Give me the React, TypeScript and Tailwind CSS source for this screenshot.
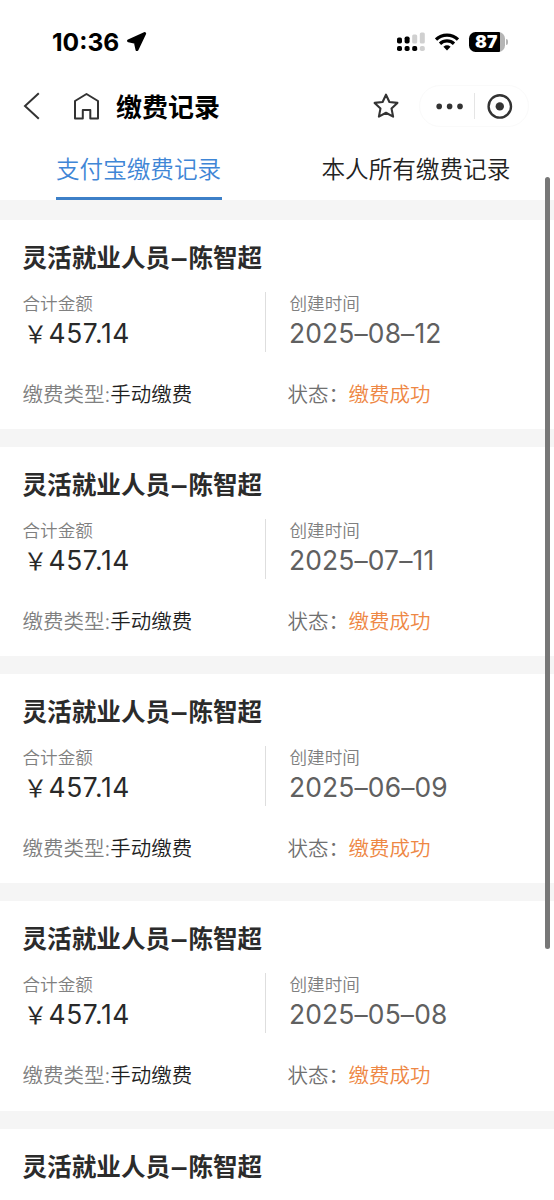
import React from "react";

const DATES = ["2025–08–12", "2025–07–11", "2025–06–09", "2025–05–08"];

function StatusBar() {
  return (
    <div className="flex h-[72px] items-center pt-[11px] pl-[52px] text-black">
      <span className="w-[68px] text-[24.6px] leading-[28px] font-bold whitespace-nowrap">10:36</span>
      <svg className="ml-[6px]" width="21" height="20" viewBox="0 0 21 20">
        <path d="M18.6 1.6 2.6 8.8 9.4 10.4 11 17.6Z" fill="currentColor" stroke="currentColor" strokeWidth="3" strokeLinejoin="round" />
      </svg>
      <svg className="ml-[250px]" width="28" height="20" viewBox="0 0 28 20">
        <g fill="#000">
          <rect x="0" y="5.5" width="5" height="6" rx="1.8" />
          <rect x="7.6" y="4.5" width="5" height="7" rx="1.8" />
          <rect x="0" y="14" width="5" height="5" rx="1.8" />
          <rect x="7.6" y="14" width="5" height="5" rx="1.8" />
          <rect x="15.2" y="14" width="5" height="5" rx="1.8" />
        </g>
        <g fill="#d0d0d0">
          <rect x="15.2" y="2.5" width="5" height="9" rx="1.5" />
          <rect x="22.8" y="0.5" width="5" height="11" rx="1.5" />
          <rect x="22.8" y="14" width="5" height="5" rx="1.8" />
        </g>
      </svg>
      <svg className="ml-[10px]" width="24" height="18" viewBox="0 0 24 18">
        <g fill="none" stroke="#000" strokeWidth="3.3">
          <path d="M1 6.6C7 .6 17 .6 23 6.6" />
          <path d="M5 10.8C9 7 15 7 19 10.8" />
        </g>
        <path d="M12 17.5 8.4 13.8Q12 10.9 15.6 13.8Z" />
      </svg>
      <div className="ml-[10px] flex h-[20px] w-[36px] items-center overflow-hidden rounded-[6.5px] bg-[linear-gradient(90deg,#000_31px,#b5b5b5_31px)] pl-[6px] text-[17.5px] leading-[20px] font-black text-white">
        87
      </div>
      <span className="ml-px h-[6px] w-[2px] rounded-r-full bg-[#b5b5b5]" />
    </div>
  );
}

function NavBar() {
  return (
    <div className="flex h-[68px] items-center pl-[23px] text-[#333]">
      <svg width="17" height="28" viewBox="0 0 17 28" fill="none" stroke="currentColor" strokeWidth="2">
        <path d="M15.8 1.2 2 14 15.8 26.8" />
      </svg>
      <svg className="ml-[33px]" width="27" height="28" viewBox="0 0 27 28" fill="none" stroke="currentColor" strokeWidth="2" strokeLinejoin="round">
        <path d="M2 9 13.5 2 25 9V26.5H17.3V18H9.8V26.5H2Z" />
      </svg>
      <h1 className="ml-[16px] w-[106px] pt-[3px] text-[26px] leading-[36px] font-bold whitespace-nowrap text-black">缴费记录</h1>
      <svg className="ml-[151px]" width="26" height="26" viewBox="0 0 26 26" fill="none" stroke="currentColor" strokeWidth="2.1" strokeLinejoin="round">
        <path d="M13 1.7 16.4 9 24.4 9.9 18.5 15.4 20.1 23.6 13 19.8 5.9 23.6 7.5 15.4 1.6 9.9 9.6 9Z" />
      </svg>
      <div className="ml-[20px] flex h-[42px] w-[110px] items-center rounded-full border border-[#fafafa] pl-[16px]">
        <svg width="28" height="8" viewBox="0 0 28 8" fill="currentColor">
          <circle cx="3.2" cy="4.4" r="2.8" />
          <circle cx="13.6" cy="4.4" r="2.8" />
          <circle cx="24" cy="4.4" r="2.8" />
        </svg>
        <span className="ml-[10px] h-[26px] w-px bg-[#e5e5e5]" />
        <svg className="ml-[12px]" width="26" height="26" viewBox="0 0 26 26">
          <circle cx="12.8" cy="13.4" r="11.2" fill="none" stroke="currentColor" strokeWidth="2.4" />
          <circle cx="12.8" cy="13.4" r="4.2" fill="currentColor" />
        </svg>
      </div>
    </div>
  );
}

function Tabs() {
  return (
    <div className="flex h-[60px] justify-between pr-[43.5px] pl-[56px] text-[23.6px] leading-[60px] whitespace-nowrap">
      <div className="h-[60px] w-[165.5px] border-b-[3px] border-[#3d80c8] font-[350] text-[#3f86d6]">支付宝缴费记录</div>
      <div className="w-[189px] font-[350] text-[#222]">本人所有缴费记录</div>
    </div>
  );
}

function CardTitle() {
  return (
    <h2 className="text-[24.6px] leading-[37px] font-bold text-[#2b2b2b]">
      灵活就业人员<span className="inline-block scale-x-120 px-[3px]">–</span>陈智超
    </h2>
  );
}

function RecordCard({ date }: { date: string }) {
  return (
    <section className="mb-[18px] h-[209.3px] shrink-0 bg-white pt-[20px] pl-[22.5px] whitespace-nowrap">
      <CardTitle />
      <div className="mt-[15px] flex h-[60px]">
        <div className="w-[243px] border-r-[1.5px] border-[#dedede]">
          <div className="text-[17.6px] leading-[24px] font-[350] text-[#808080]">合计金额</div>
          <div className="text-[26.4px] leading-[35px] tracking-[0.6px] text-[#292929]">
            <span className="inline-block w-[26px] pl-[1px] text-[24px]">￥</span>457.14
          </div>
        </div>
        <div className="pl-[24px]">
          <div className="text-[17.6px] leading-[24px] font-[350] text-[#808080]">创建时间</div>
          <div className="-ml-[0.5px] text-[26.4px] leading-[35px] tracking-[0.15px] text-[#606060]">{date}</div>
        </div>
      </div>
      <div className="mt-[28px] flex text-[20.5px] leading-[29px] font-[350]">
        <div className="w-[265px] text-[#808080]">
          缴费类型:<span className="text-[#1f1f1f]">手动缴费</span>
        </div>
        <span className="w-[61px] text-[#707070]">状态：</span>
        <span className="text-[#ee8744]">缴费成功</span>
      </div>
    </section>
  );
}

export default function App() {
  return (
    <div className="relative flex h-[1200px] w-[554px] flex-col overflow-hidden bg-white font-['Inter','Noto_Sans_CJK_SC',sans-serif]">
      <StatusBar />
      <NavBar />
      <Tabs />
      <main className="flex min-h-0 flex-1 flex-col overflow-hidden bg-[#f5f5f5] pt-[19.5px]">
        {DATES.map((date) => (
          <RecordCard key={date} date={date} />
        ))}
        <section className="flex-1 bg-white pt-[20px] pl-[22.5px] whitespace-nowrap">
          <CardTitle />
        </section>
      </main>
      <div className="absolute top-[177px] right-[4px] h-[772px] w-[5px] rounded-full bg-[#777]" />
    </div>
  );
}
